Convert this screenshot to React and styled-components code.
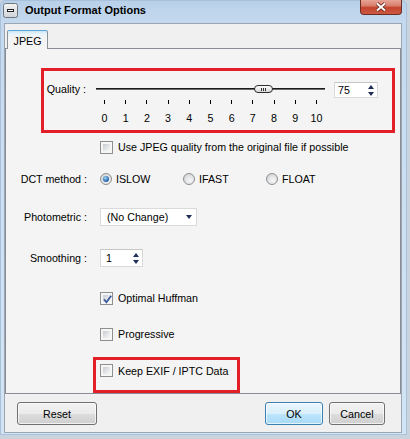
import React from 'react';
import styled, { createGlobalStyle } from 'styled-components';

const GlobalStyle = createGlobalStyle`
  html, body {
    margin: 0;
    padding: 0;
    background: #c9d3dd;
  }
  body {
    font-family: "Liberation Sans", Arial, sans-serif;
    font-size: 10.7px;
    color: #000;
  }
`;

const Window = styled.div`
  width: 407px;
  height: 435px;
  display: flex;
  flex-direction: column;
  box-sizing: border-box;
  background: linear-gradient(to bottom, #b8d0e9 0px, #c4d9ee 22px, #cadef1 120px, #d3e4f4 100%);
  border-radius: 6px 6px 0 0;
  box-shadow: inset 0 0 0 1px #a9c1da;
`;

const TitleBar = styled.div`
  height: 23px;
  display: flex;
  align-items: flex-start;
  flex-shrink: 0;
`;

const AppIcon = styled.svg`
  margin: 3px 0 0 3px;
  flex-shrink: 0;
`;

const Title = styled.div`
  margin: 3px 0 0 7px;
  font-weight: bold;
  font-size: 11px;
  line-height: 15px;
  color: #000;
`;

const CloseButton = styled.div`
  margin-left: auto;
  margin-right: 5px;
  width: 42px;
  height: 15px;
  box-sizing: border-box;
  border: 1px solid #6b2c22;
  border-top: none;
  border-radius: 0 0 4px 4px;
  background: linear-gradient(to bottom, #e6a496 0%, #d9806d 40%, #c4432e 55%, #cc5a44 100%);
  display: flex;
  align-items: center;
  justify-content: center;
`;

const Body = styled.div`
  flex: 1;
  margin: 0 5px 2px 4px;
  background: #f0f0f0;
  border: 1px solid #9aa6b3;
  display: flex;
  flex-direction: column;
`;

const TabStrip = styled.div`
  display: flex;
  padding: 6px 0 0 2px;
`;

const Tab = styled.div`
  position: relative;
  z-index: 1;
  width: 41px;
  height: 19px;
  box-sizing: border-box;
  margin-bottom: -1px;
  border: 1px solid #8c929a;
  border-bottom: none;
  border-top-color: #5fa6d6;
  border-radius: 2px 2px 0 0;
  background: linear-gradient(to bottom, #c9e6f8 0px, #e9f4fb 3px, #f4f4f4 7px, #f4f4f4 100%);
  display: flex;
  align-items: center;
  justify-content: center;
  padding-top: 1px;
`;

const TabPanel = styled.div`
  height: 346px;
  box-sizing: border-box;
  border: 1px solid #898c95;
  background: #f4f4f4;
  display: flex;
  flex-direction: column;
`;

const QualityBox = styled.div`
  margin: 19px 0 0 35px;
  width: 354px;
  height: 65px;
  box-sizing: border-box;
  border: 3px solid #e21f26;
  display: flex;
  align-items: flex-start;
  padding-top: 10px;
`;

const QualityLabel = styled.div`
  width: 42px;
  text-align: right;
  line-height: 16px;
  white-space: nowrap;
`;

const Slider = styled.div`
  margin-left: 10px;
  width: 229px;
  display: flex;
  flex-direction: column;
`;

const TrackArea = styled.div`
  position: relative;
  height: 16px;
  display: flex;
  align-items: center;
`;

const Track = styled.div`
  flex: 1;
  height: 2px;
  background: linear-gradient(to bottom, #1a1a1a 50%, #6a6a6a 50%);
`;

const Thumb = styled.div`
  position: absolute;
  top: 4px;
  width: 19px;
  height: 8px;
  box-sizing: border-box;
  border: 1px solid #2e2e2e;
  border-radius: 4px;
  background: linear-gradient(to bottom, #ffffff, #d8d8d8);
  display: flex;
  align-items: center;
  justify-content: center;
  gap: 1px;
`;

const Grip = styled.span`
  width: 1px;
  height: 3px;
  background: #333;
`;

const TickRow = styled.div`
  margin-top: 3px;
  height: 5px;
  padding: 0 8px;
  display: flex;
  justify-content: space-between;
`;

const Tick = styled.span`
  width: 1px;
  height: 4px;
  background: #000;
`;

const TickLabels = styled.div`
  margin-top: 6px;
  padding: 0 8px;
  display: flex;
  justify-content: space-between;
`;

const TickLabel = styled.span`
  width: 1px;
  display: flex;
  justify-content: center;
  line-height: 14px;
  white-space: nowrap;
`;

const SpinBox = styled.div`
  margin-left: ${({ $ml }) => $ml || 0}px;
  margin-top: ${({ $mt }) => $mt || 0}px;
  width: ${({ $w }) => $w}px;
  height: ${({ $h }) => $h}px;
  box-sizing: border-box;
  background: #fff;
  border: 1px solid #d9d9d9;
  border-top-color: #c6c6c6;
  display: flex;
  align-items: center;
`;

const SpinValue = styled.span`
  flex: 1;
  padding-left: ${({ $pl }) => $pl}px;
`;

const SpinArrows = styled.div`
  width: 12px;
  display: flex;
  flex-direction: column;
  align-items: center;
  gap: 3px;
`;

const ArrowUp = styled.span`
  width: 0;
  height: 0;
  border-left: 3.5px solid transparent;
  border-right: 3.5px solid transparent;
  border-bottom: 4px solid #1e2d55;
`;

const ArrowDown = styled.span`
  width: 0;
  height: 0;
  border-left: 3.5px solid transparent;
  border-right: 3.5px solid transparent;
  border-top: 4px solid #1e2d55;
`;

const Row = styled.div`
  margin-top: ${({ $mt }) => $mt}px;
  height: 20px;
  display: grid;
  grid-template-columns: 81px auto;
  column-gap: 13px;
  align-items: center;
`;

const RowLabel = styled.div`
  text-align: right;
  white-space: nowrap;
`;

const CheckItem = styled.label`
  display: flex;
  align-items: center;
  gap: 5px;
  white-space: nowrap;
`;

const CheckBox = styled.span`
  position: relative;
  width: 13px;
  height: 13px;
  box-sizing: border-box;
  border: 1px solid #8e8f8f;
  background: #f6f6f6;
  padding: 2px;
  display: flex;
  flex-shrink: 0;
`;

const CheckFill = styled.span`
  flex: 1;
  background: linear-gradient(135deg, #c5cad1 0%, #e3e5e8 55%, #f8f8f8 100%);
`;

const CheckMark = styled.svg`
  position: absolute;
  left: 0;
  top: 0;
`;

const RadioGroup = styled.div`
  display: flex;
`;

const RadioOption = styled.label`
  width: 83px;
  display: flex;
  align-items: center;
  gap: 4px;
`;

const RadioCircle = styled.span`
  width: 12px;
  height: 12px;
  box-sizing: border-box;
  border-radius: 50%;
  border: 1px solid #8e8f8f;
  background: radial-gradient(circle at 60% 65%, #f7f7f7 0%, #dedfe2 60%, #c3c7cd 100%);
  display: flex;
  align-items: center;
  justify-content: center;
  flex-shrink: 0;
`;

const RadioDot = styled.span`
  width: 6px;
  height: 6px;
  border-radius: 50%;
  background: radial-gradient(circle at 40% 35%, #a6d8f8 0%, #2f72b8 55%, #123f82 100%);
`;

const Combo = styled.div`
  width: 97px;
  height: 18px;
  box-sizing: border-box;
  background: #fff;
  border: 1px solid #dadada;
  display: flex;
  align-items: center;
  padding-left: 6px;
`;

const ComboText = styled.span`
  flex: 1;
`;

const ComboArrow = styled.span`
  margin-right: 4px;
  width: 0;
  height: 0;
  border-left: 3.5px solid transparent;
  border-right: 3.5px solid transparent;
  border-top: 4px solid #1e2d55;
`;

const ExifBox = styled.div`
  margin: 13px 0 0 87px;
  width: 147px;
  height: 36px;
  box-sizing: border-box;
  border: 3px solid #e21f26;
  padding: 4px 0 0 4px;
`;

const ButtonBar = styled.div`
  display: flex;
  align-items: flex-start;
  padding: 8px 16px 0 12px;
  gap: 6px;
`;

const Button = styled.button`
  width: ${({ $w }) => $w}px;
  height: 23px;
  box-sizing: border-box;
  padding: 0;
  font-family: "Liberation Sans", Arial, sans-serif;
  font-size: 10.7px;
  color: #000;
  border-radius: 3px;
  border: 1px solid ${({ $primary }) => ($primary ? '#3c7fb1' : '#707070')};
  background: ${({ $primary }) =>
    $primary
      ? 'linear-gradient(to bottom, #eaf6fd 0%, #d9f0fc 50%, #bee6fd 51%, #a7d9f5 100%)'
      : 'linear-gradient(to bottom, #f2f2f2 0%, #ebebeb 50%, #dddddd 51%, #cfcfcf 100%)'};
  box-shadow: inset 0 0 0 1px rgba(255, 255, 255, 0.7);
  margin-left: ${({ $push }) => ($push ? 'auto' : '0')};
`;

const Check = ({ checked, children }) => (
  <CheckItem>
    <CheckBox>
      <CheckFill />
      {checked && (
        <CheckMark width="13" height="13" viewBox="0 0 13 13">
          <path d="M3 6.2 L5.4 9.2 L10.2 2.8" fill="none" stroke="#3a5a9a" strokeWidth="1.8" />
        </CheckMark>
      )}
    </CheckBox>
    {children}
  </CheckItem>
);

const Radio = ({ checked, children }) => (
  <RadioOption>
    <RadioCircle>{checked && <RadioDot />}</RadioCircle>
    {children}
  </RadioOption>
);

const Spinner = ({ value, ...rest }) => (
  <SpinBox {...rest}>
    <SpinValue $pl={rest.$pl}>{value}</SpinValue>
    <SpinArrows>
      <ArrowUp />
      <ArrowDown />
    </SpinArrows>
  </SpinBox>
);

const QualitySlider = ({ value }) => {
  // value is 0..100, ticks 0..10, track inset 8px on each side
  const left = 8 + (value / 100) * 213 - 9.5;
  return (
    <Slider>
      <TrackArea>
        <Track />
        <Thumb style={{ left }}>
          <Grip />
          <Grip />
          <Grip />
        </Thumb>
      </TrackArea>
      <TickRow>
        {Array.from({ length: 11 }, (_, i) => (
          <Tick key={i} />
        ))}
      </TickRow>
      <TickLabels>
        {Array.from({ length: 11 }, (_, i) => (
          <TickLabel key={i}>{i}</TickLabel>
        ))}
      </TickLabels>
    </Slider>
  );
};

const App = () => {
  const quality = 75;

  return (
    <>
      <GlobalStyle />
      <Window>
        <TitleBar>
          <AppIcon width="15" height="15" viewBox="0 0 15 15">
            <defs>
              <linearGradient id="ico" x1="0" y1="0" x2="0" y2="1">
                <stop offset="0" stopColor="#f4f4f4" />
                <stop offset="1" stopColor="#cfd3d8" />
              </linearGradient>
            </defs>
            <rect x="0.5" y="0.5" width="14" height="14" rx="2" fill="url(#ico)" stroke="#6f757c" />
            <rect x="4.5" y="6.5" width="6" height="2" fill="#fff" stroke="#222" />
          </AppIcon>
          <Title>Output Format Options</Title>
          <CloseButton>
            <svg width="14" height="10" viewBox="0 0 14 10">
              <path d="M3 1.5 L11 8.5 M11 1.5 L3 8.5" stroke="#5b1d14" strokeWidth="3.6" />
              <path d="M3 1.5 L11 8.5 M11 1.5 L3 8.5" stroke="#fff" strokeWidth="2" />
            </svg>
          </CloseButton>
        </TitleBar>

        <Body>
          <TabStrip>
            <Tab>JPEG</Tab>
          </TabStrip>
          <TabPanel>
            <QualityBox>
              <QualityLabel>Quality :</QualityLabel>
              <QualitySlider value={quality} />
              <Spinner value={quality} $ml={9} $mt={1} $w={44} $h={16} $pl={3} />
            </QualityBox>

            <Row $mt={4}>
              <span />
              <Check>Use JPEG quality from the original file if possible</Check>
            </Row>

            <Row $mt={12}>
              <RowLabel>DCT method :</RowLabel>
              <RadioGroup>
                <Radio checked>ISLOW</Radio>
                <Radio>IFAST</Radio>
                <Radio>FLOAT</Radio>
              </RadioGroup>
            </Row>

            <Row $mt={18}>
              <RowLabel>Photometric :</RowLabel>
              <Combo>
                <ComboText>(No Change)</ComboText>
                <ComboArrow />
              </Combo>
            </Row>

            <Row $mt={21}>
              <RowLabel>Smoothing :</RowLabel>
              <Spinner value="1" $w={43} $h={18} $pl={5} />
            </Row>

            <Row $mt={20}>
              <span />
              <Check checked>Optimal Huffman</Check>
            </Row>

            <Row $mt={16}>
              <span />
              <Check>Progressive</Check>
            </Row>

            <ExifBox>
              <Check>Keep EXIF / IPTC Data</Check>
            </ExifBox>
          </TabPanel>

          <ButtonBar>
            <Button $w={80}>Reset</Button>
            <Button $w={58} $primary $push>OK</Button>
            <Button $w={56}>Cancel</Button>
          </ButtonBar>
        </Body>
      </Window>
    </>
  );
};

export default App;
